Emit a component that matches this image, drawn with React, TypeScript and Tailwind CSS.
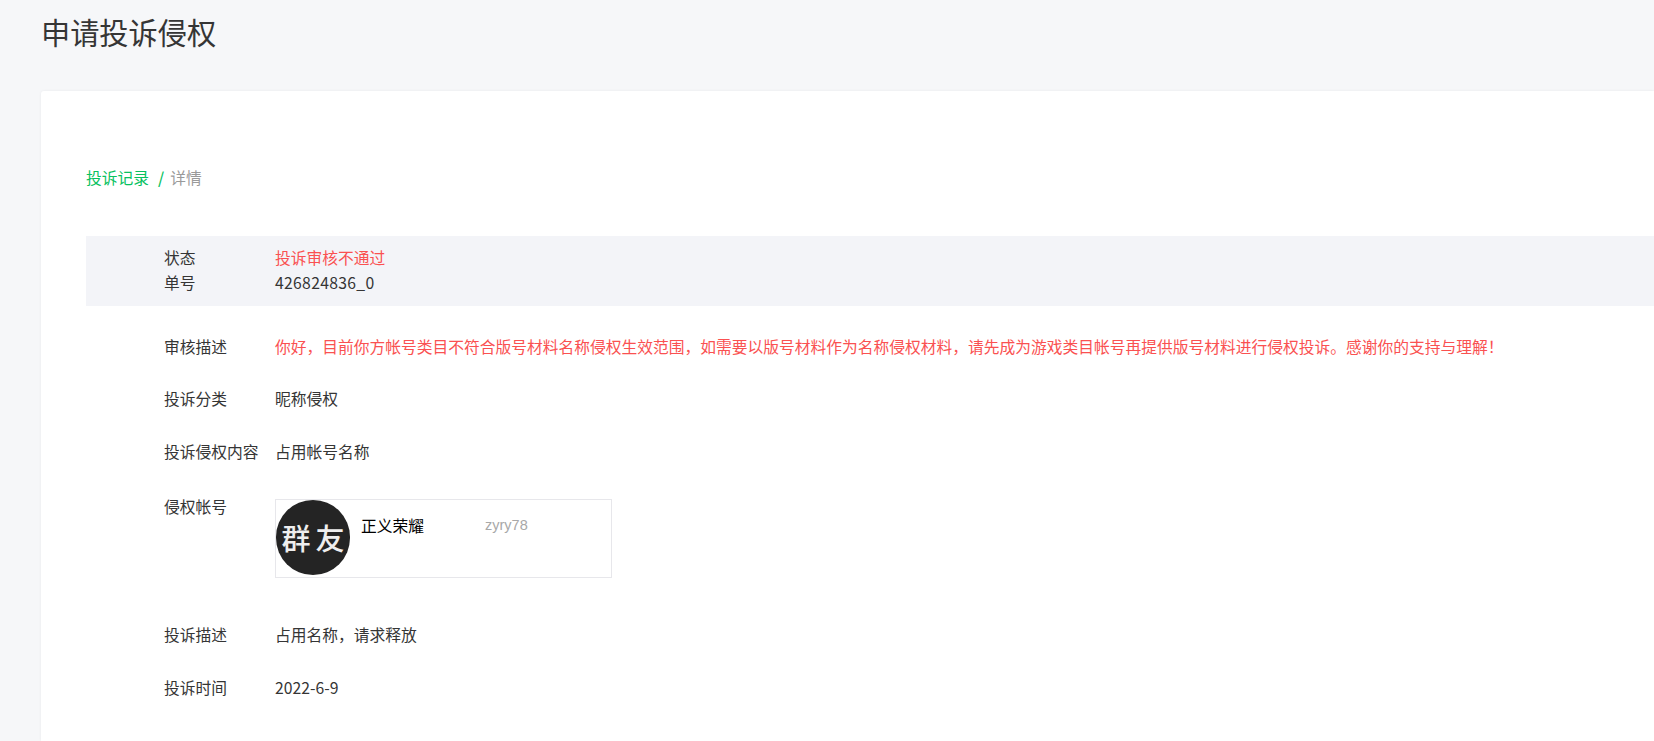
const font = { fontFamily: '"Noto Sans CJK SC", sans-serif' };
const latin = { fontFamily: '"Liberation Sans", sans-serif' };

function Row({ label, children, className = "" }: { label: string; children: React.ReactNode; className?: string }) {
  return (
    <div className={`flex items-start pl-[78px] ${className}`}>
      <div className="w-[111px] shrink-0 text-[#353535]">{label}</div>
      <div className="min-w-0 flex-1">{children}</div>
    </div>
  );
}

export default function App() {
  return (
    <div
      className="h-[741px] overflow-hidden bg-[#f6f7f9] pl-[41px] text-[15.75px] leading-[25px] text-[#353535]"
      style={font}
    >
      <h1 className="h-[91px] pt-[10px] text-[29.2px] font-normal leading-[42px] text-[#353535]">申请投诉侵权</h1>
      <div className="h-[650px] rounded-tl-[3px] bg-white pl-[45px] pt-[74px] shadow-[0_0_3px_rgba(0,0,0,0.06)]">
        <div className="flex h-[25px] items-center whitespace-nowrap">
          <span className="text-[#07c160]">投诉记录</span>
          <span className="ml-[9px] font-medium text-[#07c160]">/</span>
          <span className="ml-[6px] text-[#9a9a9a]">详情</span>
        </div>
        <div className="mt-[46px] h-[70px] bg-[#f3f4f8] pt-[9px]">
          <Row label="状态"><span className="text-[#fa5151]">投诉审核不通过</span></Row>
          <Row label="单号"><span className="tracking-[0.3px]">426824836_0</span></Row>
        </div>
        <div className="pt-[28px]">
          <Row label="审核描述" className="h-[52px]">
            <span className="whitespace-nowrap text-[#fa5151]">
              你好，目前你方帐号类目不符合版号材料名称侵权生效范围，如需要以版号材料作为名称侵权材料，请先成为游戏类目帐号再提供版号材料进行侵权投诉。感谢你的支持与理解！
            </span>
          </Row>
          <Row label="投诉分类" className="h-[53px]">昵称侵权</Row>
          <Row label="投诉侵权内容" className="h-[55px]">占用帐号名称</Row>
          <Row label="侵权帐号" className="h-[128px]">
            <div className="mt-[5px] flex h-[79px] w-[337px] border border-[#e7e7eb]">
              <div className="flex h-[75px] w-[74px] shrink-0 items-center justify-center gap-[5px] rounded-full bg-[#242424] leading-none text-[#eeeeee]">
                <span className="text-[29px] font-medium">群</span>
                <span className="text-[29px] font-medium">友</span>
              </div>
              <div className="flex pl-[11px] pt-[13px]">
                <span className="w-[124px] text-black">正义荣耀</span>
                <span className="text-[14.5px] text-[#a8a8a8]" style={latin}>zyry78</span>
              </div>
            </div>
          </Row>
          <Row label="投诉描述" className="h-[53px]">占用名称，请求释放</Row>
          <Row label="投诉时间" className="h-[52px]">2022-6-9</Row>
        </div>
      </div>
    </div>
  );
}
